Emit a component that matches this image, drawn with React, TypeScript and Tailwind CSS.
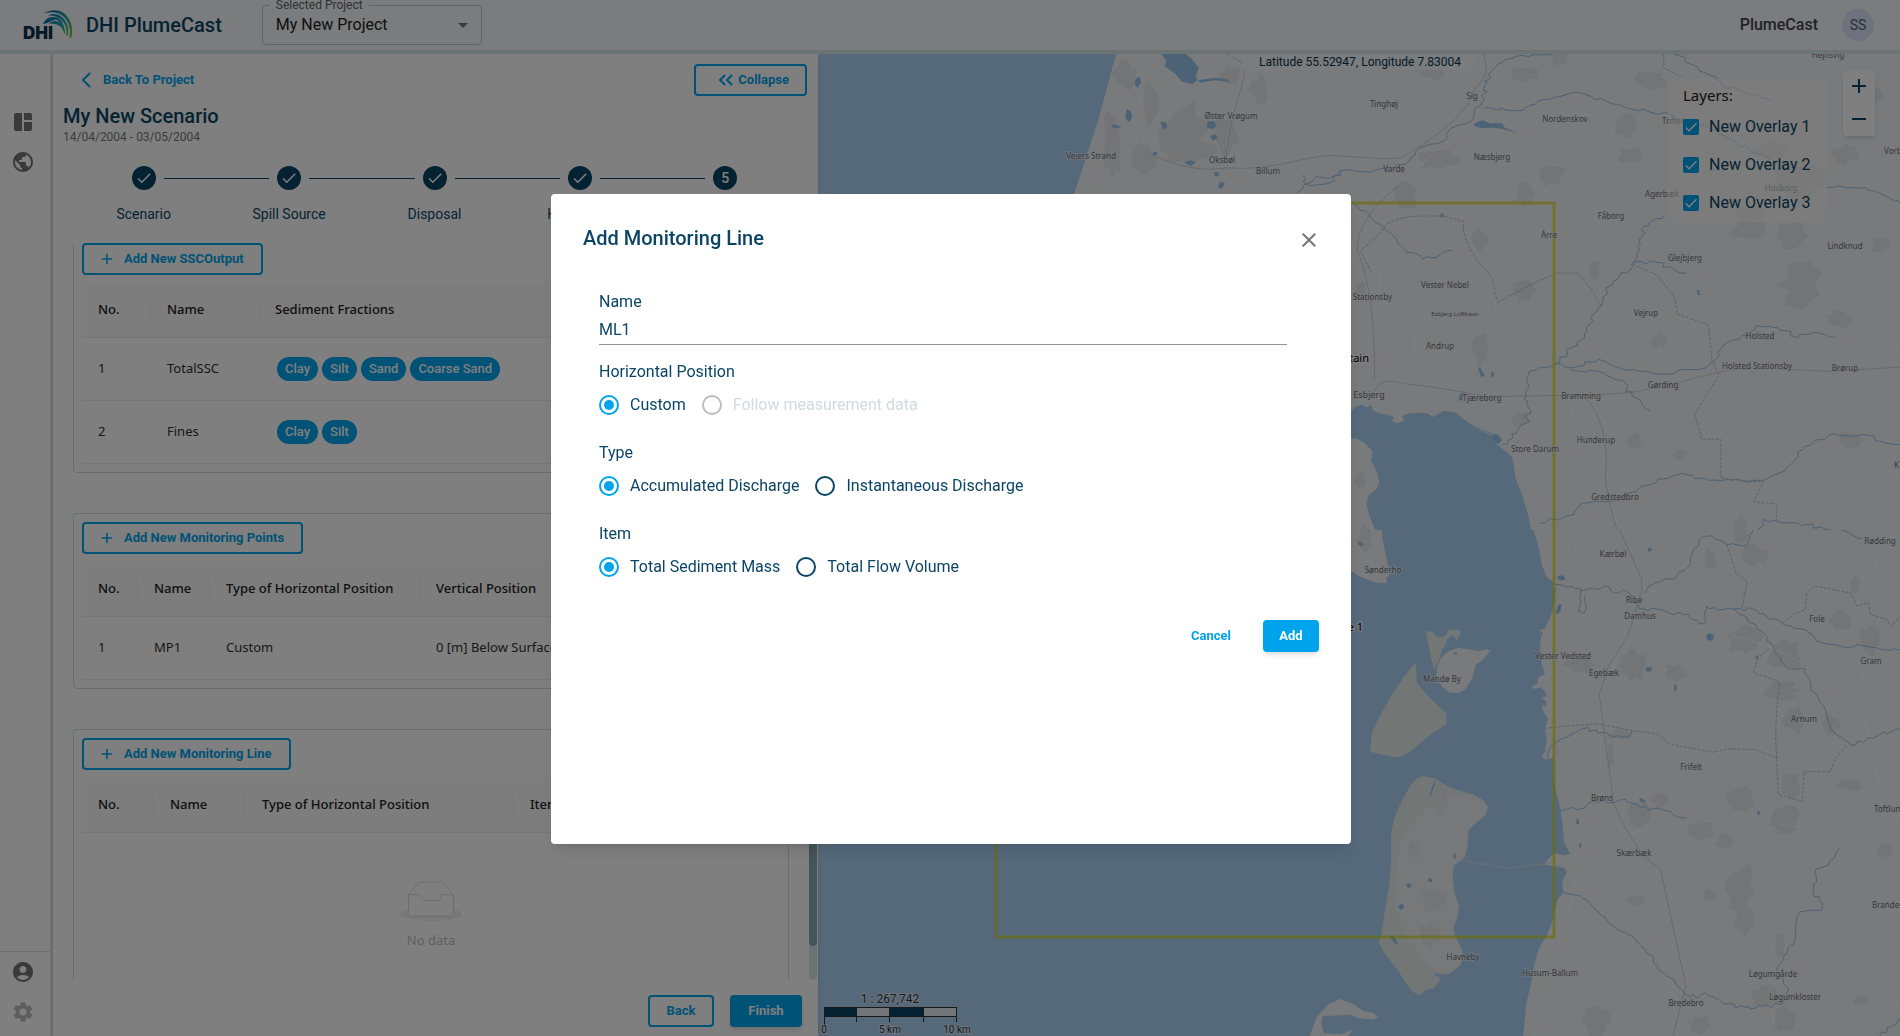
import React, { useState } from "react";
import {
  MdAccountCircle,
  MdAdd,
  MdArrowDropDown,
  MdCheck,
  MdClose,
  MdPublic,
  MdRemove,
  MdSettings,
  MdSpaceDashboard,
} from "react-icons/md";

/* ---------- map data ---------- */

type Pt = [number, number];

const pts = (s: string): Pt[] => {
  const n = s.trim().split(/[\s,]+/).map(Number);
  const out: Pt[] = [];
  for (let i = 0; i + 1 < n.length; i += 2) out.push([n[i], n[i + 1]]);
  return out;
};

const noise = (i: number) => {
  const v = Math.sin(i * 127.1 + 311.7) * 43758.5453;
  return v - Math.floor(v) - 0.5;
};

/* Subdivides a rough course and lets it meander. */
const meander = (s: string, amp = 5, step = 9) => {
  const p = pts(s);
  let d = `M${p[0][0]} ${p[0][1]}`;
  for (let i = 1; i < p.length; i++) {
    const [x0, y0] = p[i - 1];
    const [x1, y1] = p[i];
    const n = Math.max(1, Math.round(Math.hypot(x1 - x0, y1 - y0) / step));
    for (let k = 1; k <= n; k++) {
      const t = k / n;
      const j = k === n ? 0 : amp;
      const x = x0 + (x1 - x0) * t + noise(x0 + k * 3) * j;
      const y = y0 + (y1 - y0) * t + noise(y0 + k * 7) * j;
      d += `L${x.toFixed(1)} ${y.toFixed(1)}`;
    }
  }
  return d;
};

const blob = (cx: number, cy: number, rx: number, ry: number) => {
  let d = "";
  for (let i = 0; i < 16; i++) {
    const a = (i / 16) * Math.PI * 2;
    const r = 0.9 + noise(cx + cy * 2 + i) * 0.55;
    d += `${i ? "L" : "M"}${(cx + Math.cos(a) * rx * r).toFixed(1)} ${(cy + Math.sin(a) * ry * r).toFixed(1)}`;
  }
  return d + "Z";
};

const northLand =
  "M430 150L405 330 369 543 600 1100 771 1150 778 1140 786 1132 792 1140 800 1135 803 1150 812 1158 822 1160 834 1168 830 1180 838 1185 848 1178 845 1165 856 1157 875 1156 882 1158 890 1168 905 1150 925 1155 940 1180 960 1200 980 1218 978 1235 985 1248 1000 1270 1006 1285 1010 1340 1020 1390 1028 1440 1032 1480 1040 1530 1045 1568H1568V150Z" +
  "M700 1228L778 1228 790 1240 802 1262 800 1290 808 1320 812 1350 808 1370 797 1385 793 1410 797 1440 805 1480 815 1520 822 1568 700 1568Z";

const southLand =
  "M586 0L595 20 600 55 610 90 620 120 628 160 632 190 645 225 660 240 668 265 665 300 655 340 640 375 624 382 636 388 630 400 627 440 632 480 640 510 622 520 620 538 605 545 612 553 630 548 640 560 645 572 632 580 642 588 646 604 636 600 632 606 640 625 648 640 640 670 645 700 640 735 632 750 640 760 662 755 662 800 668 850 680 900 686 950 690 1000 705 1035 690 1040 665 1032 645 1055 640 1068 690 1075 697 1090 685 1115 688 1150 675 1165 668 1190 660 1230 645 1275 625 1310 610 1370 605 1410 592 1470 588 1510 583 1568H1568V0Z" +
  "M100 0L171 0 175 25 195 55 213 78 215 110 222 150 230 190 236 215 225 230 228 243 200 242 180 235 150 220 100 180Z" +
  "M370 460L390 440 415 433 470 442 485 437 498 440 475 470 460 480 450 520 435 550 415 565 390 563 370 545 357 520 357 490Z" +
  "M25 1568L45 1510 75 1475 105 1460 140 1475 165 1495 190 1500 205 1512 190 1520 150 1515 130 1505 100 1508 60 1510 55 1530 62 1560 110 1562 140 1548 125 1568Z";

const sand =
  "M325 808L352 815 395 843 455 862 480 880 491 900 485 920 440 965 438 1010 430 1045 402 1070 398 1100 405 1160 415 1185 410 1225 400 1250 405 1275 425 1320 420 1360C400 1380 380 1390 345 1385L368 1400 350 1428 330 1432 312 1450 290 1435 255 1375C240 1350 220 1330 206 1295L212 1275 225 1180C235 1130 238 1080 238 1010C237 960 245 930 262 890C280 850 300 805 325 808Z" +
  "M303 480L295 483 270 520 240 570 205 640 188 680 183 735 200 742 230 748 260 753 290 735 320 705 350 680 383 655 383 625 350 590 320 555 305 535Z" +
  "M329 385L345 385 360 402 380 398 390 380 418 380 420 390 410 410 400 395 385 405 380 425 370 440 365 465 350 495 340 450Z";

const romoLand =
  "M400 862L455 865 480 880 491 900 485 920 440 965 438 1010 430 1045 402 1070 398 1100 405 1160 415 1185 410 1225 400 1250 405 1275 425 1320 420 1360C400 1380 390 1390 370 1388C300 1330 262 1260 250 1180C258 1100 248 1020 275 980C300 930 350 868 400 862Z";

const northLakes =
  "M495 150L503 170 500 185 515 205 525 228 540 236 548 225 575 218 590 222 597 235 590 228 572 225 552 232 545 215 550 190 540 165 530 150ZM458 222l6-8 2 18-5 14-4-10zM445 305l6 5 2 20-4 12-6-12zM562 340l10-2 4 14-6 10-8-4zM566 380l8-4 4 12-8 6zM494 340l8 2 2 16-6 6zM422 348l12 4 4 6-12 0zM528 455l10-6 8 6-8 10zM572 482l6 0 2 10-6 2zM580 510l8 2-4 16-6-2zM484 425l5 0 1 8-6 2zM950 345l12-8 10 8 18 0 4 12 18 16-20-12-16-4-14 2-12-6zM930 1100l5 3-3 20-5-4zM955 1030l4 2 6 20-5 4zM975 1040l4 4-1 12-4-2zM976 1218l8-2 6 16-5 12-8-10zM901 598l4 0 1 10-5 2zM1203 1535l5 0 1 8-5 2zM1273 812l3 0 2 14-4 0z";

const southLakes =
  "M152 122l8 0 6 8-4 6-10-6zM908 142l8-2 3 8-8 4zM674 222l14-2 6 12-12 4-10-6zM1062 395l8-6 12 8-4 14-12 0-4-8zM905 488l16 2-6 12-12 0zM978 540l6 0 0 16-6 4zM1192 454l6 2-2 12-5-4zM722 934l6 0 2 14-8 0zM730 1004l6 2-2 14-5-4zM280 1122l8 0 2 10-8 4-4-8zM336 1106l10 4-2 8-10-4zM260 1184l8-2 4 10-8 8-8-8zM400 1035l6 0 2 14-6 0zM886 870l14 8 4 6-14 0zM1196 910l6 2-2 10-6-2zM676 304l8 2-4 20-8 8-4-6zM402 446l8 0 0 6-6 0zM352 820l-14 44 4 2 12-42zM242 1272l14 24-4 6-20-26z";

const northRivers = [
  "1085 152 1020 155 990 175 975 200 965 240 965 280 950 310 945 340 915 360 905 395 870 415 850 460 800 482 755 478 740 500 720 495 700 530 692 540",
  "965 300 1010 310 1040 290 1060 278 1092 260 1120 270 1170 302 1240 325 1260 340 1300 365 1350 420 1410 470",
  "700 490 712 520 740 512 755 480",
  "1240 152 1265 180 1300 215 1310 240 1380 280",
  "775 570 800 610 825 650 850 700 875 725 900 715 918 700",
  "1225 605 1195 635 1190 700 1180 745 1150 790 1130 860 1110 935 1085 990 1065 1020 1030 1040 1025 1110 1030 1180 1005 1215 990 1245",
  "1180 735 1215 735 1240 755 1258 765",
  "1065 1018 1090 1030 1130 1005 1160 1030 1200 1040 1215 1048 1275 1035 1300 1010 1310 970 1340 940 1360 912 1390 918 1420 945 1450 932 1475 945",
  "1090 1035 1130 1040 1165 1065 1180 1110 1205 1150",
  "1462 525 1500 525 1530 535 1568 570",
  "1045 1465 1095 1440 1105 1410 1160 1400 1190 1365 1250 1325 1290 1345 1370 1345 1400 1320 1430 1250 1470 1215 1510 1218 1568 1245",
  "1265 1568 1285 1500 1325 1530 1350 1530 1370 1455 1420 1465 1470 1485 1500 1505",
];

const southRivers = [
  "612 65 640 62 662 68 685 52 710 48 735 5 770 12 800 20 820 0",
  "650 235 700 255 775 262 795 252 820 272 845 262 865 280 885 318 940 320 965 330 1000 335 1055 362 1062 310 1090 320 1140 322",
  "735 262 735 300 728 325 742 332 748 312 746 280",
  "900 270 930 240 980 230 1010 200 1048 110 1065 105 1115 130 1165 135 1195 62 1215 58 1240 65 1320 75 1400 85 1470 112",
  "1135 318 1180 318 1220 340 1260 362 1330 390 1360 415 1420 430 1480 428 1568 440",
  "1140 325 1190 365 1220 400 1240 440 1270 490 1320 495 1340 560 1375 620 1385 670 1440 718 1490 695 1568 670",
  "650 758 655 720 690 695 720 680 740 668 790 680 830 690 862 690 868 676",
  "680 908 745 900 755 885 820 885 850 875 890 900 960 910 1010 930",
  "688 1146 730 1156 780 1205 820 1248 870 1278 925 1345 935 1372 980 1410 1005 1445",
  "1005 1445 1035 1455 1060 1442 1110 1475 1160 1485 1210 1482 1260 1475 1275 1440 1245 1375 1265 1330 1290 1300 1305 1205 1365 1198 1365 1180 1345 1160 1345 1090 1385 1055 1408 1018",
  "1515 1568 1568 1515",
];

const northRoads = [
  "M615 150C620 250 590 350 590 400C588 460 650 500 660 543",
  "M835 690C800 780 800 850 870 900C900 860 960 870 1000 890C1060 940 1110 950 1150 930C1240 900 1290 875 1360 875C1440 880 1500 930 1568 980",
  "M870 900C850 960 870 1040 868 1110",
  "M1035 600C980 750 970 850 990 980L1030 1060",
  "M1085 1110C1100 1200 1100 1280 1120 1310C1150 1400 1160 1500 1175 1568",
  "M700 150C720 260 740 300 780 360M1020 380C1040 430 1020 540 1090 560M1420 330C1380 420 1480 600 1510 700",
  "M900 1120C960 1220 1010 1260 1080 1270",
  "M1150 330L1010 290 940 350 860 480",
  "M1568 1330C1480 1330 1400 1310 1340 1400",
];
const northRails = [
  "M480 430C520 470 560 480 590 470C650 480 700 440 740 435C790 440 830 450 845 440C880 400 940 330 950 250C980 200 960 160 965 150",
  "M590 150L617 180C615 260 592 330 590 440",
  "M840 520C800 580 780 640 780 700C800 800 805 900 805 1060",
  "M805 1100C810 1060 830 1065 850 1075C900 1085 940 1100 970 1112C1060 1105 1140 1110 1190 1095C1260 1070 1300 1035 1350 1030L1470 1040 1568 1028",
  "M1108 1110C1140 1160 1145 1280 1140 1330C1145 1440 1165 1520 1175 1568",
];
const northBorders = [
  "M815 645C830 600 870 605 905 605L935 620C930 660 945 700 958 740C985 780 975 820 985 845L1040 790 1070 765 1100 765 1120 810 1135 860",
  "M820 640C800 680 790 690 785 705L800 760",
  "M1225 150L1225 190 1250 215",
  "M1180 740L1215 770 1240 830 1245 880 1290 910 1295 1010 1305 1050 1270 1160 1280 1230 1308 1230 1308 1340 1370 1350 1355 1405 1390 1412 1388 1460",
];
const southRoads = [
  "M720 0C710 60 700 120 700 200",
  "M895 235C980 180 1060 60 1150 0M900 265C1040 270 1100 280 1150 260",
  "M930 350C1050 370 1250 420 1310 480",
  "M865 320C840 400 840 480 785 560C780 700 790 800 790 890L845 975",
  "M660 1062C740 1040 730 1010 845 985C960 930 1100 950 1200 930C1310 980 1380 940 1568 940",
  "M1568 110L1500 160 1520 260M1465 480C1470 640 1510 800 1525 940C1480 1080 1380 1190 1260 1320",
  "M735 1045C700 1120 720 1180 700 1220C650 1300 620 1400 610 1568",
  "M875 1050L960 1160C1100 1220 1200 1300 1230 1400C1220 1450 1230 1500 1250 1568",
  "M930 380C1000 480 1100 580 1230 640C1300 720 1400 680 1500 780",
  "M1568 1480C1500 1540 1400 1560 1300 1480",
];
const southRails = [
  "M820 0L840 100 893 230 893 262 868 360 855 400 805 490 782 570 820 890 850 960 895 1040 942 1080 1008 1420 975 1568",
];
const southBorders = [
  "M640 668L690 662 780 655 870 675 935 685 970 715 1080 738 1120 728 1188 730 1248 756",
  "M1185 0L1195 14 1250 14 1243 62",
  "M1115 130L1140 215 1168 238 1155 315",
  "M1260 360L1290 335 1320 320 1325 270 1345 252 1440 272 1455 310 1485 300 1490 335 1530 348 1545 370 1568 340",
  "M1225 435L1195 465 1185 505 1253 532 1245 620 1243 700 1250 862 1312 882 1317 795 1385 795 1400 755 1430 718",
];

const forests: [number, number, number, number][] = [
  [1185, 130, 24, 30], [1125, 75, 12, 14], [1145, 160, 12, 18], [1190, 150, 30, 14], [1112, 145, 10, 34], [1225, 135, 14, 20],
  [1260, 90, 10, 14], [1230, 75, 10, 10], [1150, 105, 8, 22],
  [1430, 70, 16, 10], [1525, 73, 18, 8], [1560, 60, 8, 8], [1625, 125, 12, 14], [1630, 155, 14, 8], [1440, 160, 24, 10],
  [1405, 195, 14, 14], [1550, 175, 16, 12], [1525, 195, 10, 14], [1650, 80, 18, 10], [1800, 180, 26, 22], [1770, 150, 20, 8],
  [1845, 155, 14, 10], [1750, 230, 22, 10], [1790, 235, 18, 14], [1800, 285, 20, 26], [1840, 320, 14, 10], [1750, 215, 16, 10],
  [1480, 350, 8, 18], [1525, 290, 12, 12], [1480, 240, 8, 12], [1595, 270, 6, 10], [1880, 245, 10, 8], [1870, 95, 16, 8],
  [1635, 440, 8, 8], [1680, 455, 8, 6], [1850, 440, 12, 8], [1520, 420, 8, 8], [1660, 340, 8, 8],
  [1740, 530, 8, 14], [1755, 555, 14, 12], [1710, 560, 6, 12], [1745, 640, 20, 16], [1785, 655, 18, 18], [1635, 665, 14, 16],
  [1580, 665, 16, 8], [1675, 673, 12, 10], [1855, 585, 6, 10], [1840, 620, 14, 10], [1870, 640, 12, 14], [1780, 690, 20, 10],
  [1830, 725, 10, 10], [1795, 720, 12, 16], [1620, 735, 14, 6], [1610, 755, 4, 14], [1790, 785, 12, 14], [1740, 800, 14, 14],
  [1785, 820, 16, 14], [1700, 830, 18, 10], [1640, 815, 12, 14], [1660, 800, 10, 8], [1740, 890, 16, 26], [1745, 920, 10, 14],
  [1710, 895, 8, 6], [1725, 840, 10, 8], [1780, 945, 6, 14], [1635, 900, 10, 6], [1765, 995, 12, 14], [1595, 1020, 16, 16],
  [1785, 1020, 12, 14], [1700, 1025, 12, 8], [1860, 1000, 8, 6], [1850, 785, 12, 6], [1885, 850, 8, 8], [1440, 800, 8, 14],
  [1433, 900, 14, 14], [1430, 935, 12, 14], [1415, 850, 8, 10], [1365, 540, 8, 14], [1360, 480, 6, 10], [1360, 290, 6, 10],
];

type Place = [string, number, number, ("start" | "end")?, number?];
const places: Place[] = [
  ["Vejers Strand", 1091, 156], ["Øster Vrøgum", 1231, 116], ["Tinghøj", 1384, 104], ["Sig", 1472, 96],
  ["Nordenskov", 1565, 119], ["Oksbøl", 1222, 160], ["Billum", 1268, 171], ["Varde", 1394, 169],
  ["Næsbjerg", 1492, 157], ["Tofterup", 1662, 121, "start"], ["Agerbæk", 1662, 194], ["Hovborg", 1781, 188],
  ["Fåborg", 1611, 216], ["Årre", 1549, 235], ["Glejbjerg", 1685, 258], ["Lindknud", 1845, 246],
  ["Vester Nebel", 1445, 285], ["er Stationsby", 1392, 297, "end"], ["Esbjerg Lufthavn", 1455, 313, undefined, 6],
  ["Vejrup", 1646, 313], ["Holsted", 1760, 336], ["Holsted Stationsby", 1757, 366], ["Brørup", 1845, 368],
  ["Andrup", 1440, 346], ["Gørding", 1663, 385], ["Bramming", 1581, 396], ["Esbjerg", 1369, 395, undefined, 9],
  ["Tjæreborg", 1482, 398], ["Store Darum", 1535, 449], ["Hunderup", 1596, 440], ["Gredstedbro", 1615, 497],
  ["Kærbøl", 1613, 554], ["Rødding", 1880, 541], ["Hejnsvig", 1828, 55], ["Vorbasse", 1884, 151, "start"],
  ["K", 1894, 465, "start"], ["Sønderho", 1383, 570], ["Ribe", 1634, 600], ["Damhus", 1640, 616], ["Fole", 1817, 619],
  ["Vester Vedsted", 1563, 656], ["Egebæk", 1604, 673], ["Gram", 1871, 661], ["Mandø By", 1442, 679],
  ["Arnum", 1804, 719], ["Frifelt", 1691, 767], ["Brøns", 1602, 798], ["Toftlund", 1874, 809, "start"],
  ["Skærbæk", 1634, 853], ["Branderup", 1872, 905, "start"], ["Havneby", 1463, 957], ["Husum-Ballum", 1550, 973],
  ["Løgumgårde", 1773, 974], ["Løgumkloster", 1795, 997], ["Bredebro", 1686, 1003],
];

function Lines({ d, stroke, width, dash }: { d: string[]; stroke: string; width: number; dash?: string }) {
  return (
    <path
      d={d.join("")}
      fill="none"
      stroke={stroke}
      strokeWidth={width}
      strokeDasharray={dash}
      strokeLinejoin="round"
      vectorEffect="non-scaling-stroke"
    />
  );
}

function MapCanvas() {
  return (
    <svg
      viewBox="818 54 1082 982"
      preserveAspectRatio="xMidYMid slice"
      className="absolute inset-0 h-full w-full"
      fontFamily='"Noto Sans", sans-serif'
      aria-label="Map"
    >
      <rect x="818" y="54" width="1082" height="982" fill="#acd2f6" />
      <clipPath id="north"><rect x="818" y="54" width="1082" height="476" /></clipPath>
      <clipPath id="south"><rect x="818" y="530" width="1082" height="506" /></clipPath>
      <g clipPath="url(#north)">
        <path transform="translate(820 0) scale(.6888 .3571)" d={northLand} fill="#f3f5f8" />
      </g>
      <g clipPath="url(#south)">
        <g transform="translate(1300 500) scale(.3827 .3418)">
          <path d={southLand} fill="#f3f5f8" />
          <path d={sand} fill="#e4eeec" />
          <path d={romoLand} fill="#eff1f3" />
        </g>
      </g>
      <path d={forests.map((f) => blob(...f)).join("")} fill="#e6e8eb" />
      <g clipPath="url(#north)">
        <g transform="translate(820 0) scale(.6888 .3571)">
          <Lines d={northRoads} stroke="#fdfdfe" width={1} />
          <Lines d={northRails} stroke="#d0d2d4" width={1} />
          <Lines d={northBorders} stroke="#bcbec1" width={1} dash="3 1.5" />
          <path d={northLakes} fill="#98c6ef" />
          <Lines d={northRivers.map((r) => meander(r, 10, 9))} stroke="#98c3ea" width={1} />
        </g>
      </g>
      <g clipPath="url(#south)">
        <g transform="translate(1300 500) scale(.3827 .3418)">
          <Lines d={southRoads} stroke="#fdfdfe" width={1} />
          <Lines d={["M415 1052L545 1078 600 1070 660 1062"]} stroke="#d9e3ec" width={1} />
          <Lines d={southRails} stroke="#d0d2d4" width={1} />
          <Lines d={southBorders} stroke="#bcbec1" width={1} dash="3 1.5" />
          <path d={southLakes} fill="#98c6ef" />
          <Lines d={southRivers.map((r) => meander(r, 11, 11))} stroke="#98c3ea" width={1} />
        </g>
      </g>
      <rect x="996" y="203" width="558" height="734" fill="none" stroke="#d8d800" strokeOpacity="0.6" strokeWidth="3" />
      <g fill="#6e7078" stroke="#f3f5f8" strokeOpacity="0.6" strokeWidth="2" paintOrder="stroke">
        {places.map(([name, x, y, anchor, size]) => (
          <text key={name} x={x} y={y + 3} fontSize={size ?? 8} textAnchor={anchor ?? "middle"}>
            {name}
          </text>
        ))}
      </g>
      <g fill="#000" stroke="#fff" strokeOpacity="0.7" strokeWidth="3" paintOrder="stroke" fontSize="11">
        <text x="1369" y="362" textAnchor="end">tain</text>
        <text x="1363" y="631" textAnchor="end">e 1</text>
      </g>
    </svg>
  );
}

function ScaleBar() {
  return (
    <svg viewBox="0 0 160 46" className="absolute bottom-0 left-0 h-[46px] w-[160px]" fontFamily="Roboto, sans-serif" aria-label="Scale">
      <rect x="6" y="17" width="132" height="10" fill="#e6ecf0" />
      <path d="M6 17h32v10H6zM71 17h34v10H71z" fill="#0b4566" />
      <path d="M6 17.500H138.500V26.500H6.500V17M38.500 17V32M71.500 17V32M105.500 17V32M138.500 17V32M6.500 17V36" fill="none" stroke="#333" />
      <g fill="#333" textAnchor="middle" stroke="#fff" strokeOpacity="0.5" strokeWidth="2" paintOrder="stroke">
        <text x="72" y="13" fontSize="12">1 : 267,742</text>
        <g fontSize="10">
          <text x="6" y="43">0</text>
          <text x="72" y="43">5 km</text>
          <text x="139" y="43">10 km</text>
        </g>
      </g>
    </svg>
  );
}

/* ---------- shell ---------- */

function Logo() {
  return (
    <svg viewBox="0 0 50 30" className="h-[30px] w-[50px]" role="img" aria-label="DHI">
      <defs>
        <linearGradient id="wave" x1="22" y1="4" x2="50" y2="24" gradientUnits="userSpaceOnUse">
          <stop offset="0" stopColor="#0a6aa8" />
          <stop offset="0.55" stopColor="#1f9db5" />
          <stop offset="0.8" stopColor="#4fb868" />
          <stop offset="1" stopColor="#7cc242" />
        </linearGradient>
      </defs>
      <g fill="url(#wave)">
        <path d="M21 3C26 .5 31 -.5 36 .8C43 3 48 10 49 18C49.500 22 49 26 48 28L46.500 28C48 20 46 12 41 7C36 2 29 1.500 21 3Z" />
        <path d="M25 5.500C31 2.500 37 4.500 41 9C45 14 46 20 45 26L43.500 25C44 18 42 13 38 9.500C34 6 30 5 25 5.500Z" />
        <path d="M20 14C22 9 27 6 32 7.500C33 8 34 9 34.500 10C30 9 28 13 20 14Z" />
        <path d="M31 6.500C36 7 40 12 41 17C42 20 42 22 42 24C39 20 39 14 31 6.500Z" />
        <path d="M26 14C29 10.500 33 10 36 12.500C38 14 39 16 39.500 18.500C36 14.500 32 13 26 14Z" />
      </g>
      <text x="0" y="29" fontFamily="Inter, sans-serif" fontWeight="900" fontSize="17" fill="#0b3550">DHI</text>
    </svg>
  );
}

function Header() {
  return (
    <header className="flex h-[54px] shrink-0 items-center border-b-4 border-[#d8e6e6] bg-[#f6f8fb] pr-[26px] pl-[23px]">
      <Logo />
      <h1 className="ml-[13px] text-xl font-medium text-[#0b4566]">DHI PlumeCast</h1>
      <div className="relative ml-10 h-10 w-[220px]">
        <label htmlFor="project" className="absolute -top-2 left-2 bg-[#f6f8fb] px-1.5 text-xs text-[#5f6368]">
          Selected Project
        </label>
        <select
          id="project"
          className="h-full w-full appearance-none rounded border border-[#c0c4c8] bg-transparent px-[13px] text-base text-[#212121]"
        >
          <option>My New Project</option>
        </select>
        <MdArrowDropDown className="pointer-events-none absolute top-2 right-[7px] size-6 text-[#757575]" />
      </div>
      <span className="ml-auto text-base font-medium text-[#42444e]">PlumeCast</span>
      <button className="ml-6 flex size-8 items-center justify-center rounded-full bg-[#dde4f8] text-sm text-[#56607c]">SS</button>
    </header>
  );
}

function Sidebar() {
  return (
    <nav className="flex w-[53px] shrink-0 flex-col border-r-3 border-[#d8e4e8] bg-white pt-14">
      <div className="flex flex-col items-center gap-4 pr-1 text-[#757575]">
        <button aria-label="Dashboard"><MdSpaceDashboard className="size-6" /></button>
        <button aria-label="Map"><MdPublic className="size-6" /></button>
      </div>
      <div className="mt-auto flex flex-col items-center gap-4 border-t border-[#d3dfe5] pt-2 pr-1 pb-3 text-[#757575]">
        <button aria-label="Account"><MdAccountCircle className="size-6" /></button>
        <button aria-label="Settings" className="text-[#bdbdbd]"><MdSettings className="size-6" /></button>
      </div>
    </nav>
  );
}

function OutlineButton({ children, className = "" }: { children: React.ReactNode; className?: string }) {
  return (
    <button
      className={`flex h-8 items-center rounded border-2 border-[#00a4ec] text-[13px] font-bold text-[#00a4ec] ${className}`}
    >
      {children}
    </button>
  );
}

const steps = ["Scenario", "Spill Source", "Disposal", "Hydraulics", "Output"];

function Stepper() {
  return (
    <ol className="mt-[22px] mr-5 ml-[18px] flex">
      {steps.map((s, i) => (
        <li key={s} className="flex flex-1 flex-col items-center">
          <div className="flex w-full items-center gap-2">
            <span className={i === 0 ? "h-px flex-1" : "h-px flex-1 bg-[#0b4566]"} />
            <span className="flex size-6 items-center justify-center rounded-full bg-[#0b4566] text-sm font-medium text-white">
              {i < 4 ? <MdCheck className="size-[18px]" /> : i + 1}
            </span>
            <span className={i === 4 ? "h-px flex-1" : "h-px flex-1 bg-[#0b4566]"} />
          </div>
          <span className="mt-3.5 text-sm text-[#0b4566]">{s}</span>
        </li>
      ))}
    </ol>
  );
}

type Column = { title: string; width: string };

function DataTable({ columns, rows }: { columns: Column[]; rows: React.ReactNode[][] }) {
  return (
    <table className="mt-2 w-full table-fixed border-separate border-spacing-0 font-['Noto_Sans',sans-serif] text-[13px]">
      <thead>
        <tr>
          {columns.map((c, i) => (
            <th
              key={c.title}
              className={`h-[55px] border-b border-[#eaeaea] bg-[#fafafa] p-0 text-left font-medium whitespace-nowrap text-[#202020] first:rounded-tl-lg last:rounded-tr-lg ${c.width}`}
            >
              <div className={`flex h-[22px] items-center pl-4 ${i < columns.length - 1 ? "border-r border-[#f0f0f0]" : ""}`}>
                {c.title}
              </div>
            </th>
          ))}
        </tr>
      </thead>
      <tbody>
        {rows.map((r, i) => (
          <tr key={i}>
            {r.map((cell, j) => (
              <td key={j} className="h-[63px] overflow-hidden border-b border-[#eaeaea] py-0 pl-4 whitespace-nowrap text-[#303030]">
                {cell}
              </td>
            ))}
          </tr>
        ))}
        {rows.length === 0 && (
          <tr>
            <td colSpan={columns.length} className="pt-12 pb-12 text-[#bfbfbf]">
              <div className="flex flex-col items-center gap-2">
                <svg viewBox="0 0 64 41" className="h-10 w-16" aria-hidden="true">
                  <g transform="translate(0 1)" fill="none" fillRule="evenodd">
                    <ellipse fill="#f0f0f0" cx="32" cy="33" rx="32" ry="7" />
                    <g fillRule="nonzero" stroke="#d9d9d9">
                      <path d="M55 12.760L44.854 1.258C44.367.474 43.656 0 42.907 0H21.093c-.749 0-1.460.474-1.947 1.257L9 12.761V22h46v-9.240z" fill="#fff" />
                      <path
                        d="M41.613 15.931c0-1.605.994-2.930 2.227-2.931H55v18.137C55 33.260 53.680 35 52.050 35h-40.100C10.320 35 9 33.259 9 31.137V13h11.160c1.233 0 2.227 1.323 2.227 2.928v.022c0 1.605 1.005 2.901 2.237 2.901h14.752c1.232 0 2.237-1.308 2.237-2.913v-.007z"
                        fill="#fff"
                      />
                    </g>
                  </g>
                </svg>
                <span className="leading-[22px]">No data</span>
              </div>
            </td>
          </tr>
        )}
      </tbody>
    </table>
  );
}

function Card({ action, first, children }: { action: string; first?: boolean; children: React.ReactNode }) {
  return (
    <section className={`border border-[#cfdde3] p-2 ${first ? "rounded-b border-t-0 pt-0" : "mt-10 rounded"}`}>
      <OutlineButton className="gap-2 pr-[17px] pl-3.5">
        <MdAdd className="size-[18px]" />
        {action}
      </OutlineButton>
      {children}
    </section>
  );
}

function Chips({ items }: { items: string[] }) {
  return (
    <div className="flex gap-1 pl-0.5 font-[Roboto,sans-serif] font-medium">
      {items.map((t) => (
        <span key={t} className="flex h-6 items-center rounded-full bg-[#00a4ec] px-2 text-white">
          {t}
        </span>
      ))}
    </div>
  );
}

function ScenarioPanel() {
  return (
    <main className="z-10 flex w-[765px] shrink-0 flex-col bg-white shadow-md">
      <div className="flex items-center justify-between pt-2.5 pr-[11px] pl-6">
        <button className="flex items-center gap-2 text-[13px] font-bold text-[#00a4ec]">
          <svg viewBox="0 0 18 18" className="size-[18px]" fill="none" stroke="currentColor" strokeWidth="2" aria-hidden="true">
            <path d="M13 2L6 9l7 7" />
          </svg>
          Back To Project
        </button>
        <OutlineButton className="gap-1 pr-4 pl-5">
          <svg viewBox="0 0 18 18" className="size-[18px]" fill="none" stroke="currentColor" strokeWidth="2" aria-hidden="true">
            <path d="M9 4L4 9l5 5M16 4l-5 5 5 5" />
          </svg>
          Collapse
        </OutlineButton>
      </div>
      <div className="pt-1.5 pl-2.5">
        <h2 className="text-xl leading-7 font-medium text-[#0b4566]">My New Scenario</h2>
        <p className="text-xs leading-[14px] text-[#757575]">14/04/2004 - 03/05/2004</p>
      </div>
      <Stepper />
      <div className="mt-[19px] mr-px flex min-h-0 flex-1">
        <div className="min-w-0 flex-1 overflow-hidden pr-5 pl-5">
          <Card action="Add New SSCOutput" first>
            <DataTable
              columns={[
                { title: "No.", width: "w-[69px]" },
                { title: "Name", width: "w-[108px]" },
                { title: "Sediment Fractions", width: "" },
              ]}
              rows={[
                ["1", "TotalSSC", <Chips items={["Clay", "Silt", "Sand", "Coarse Sand"]} />],
                ["2", "Fines", <Chips items={["Clay", "Silt"]} />],
              ]}
            />
          </Card>
          <Card action="Add New Monitoring Points">
            <DataTable
              columns={[
                { title: "No.", width: "w-14" },
                { title: "Name", width: "w-[72px]" },
                { title: "Type of Horizontal Position", width: "w-[210px]" },
                { title: "Vertical Position", width: "" },
              ]}
              rows={[["1", "MP1", "Custom", "0 [m] Below Surface"]]}
            />
          </Card>
          <Card action="Add New Monitoring Line">
            <DataTable
              columns={[
                { title: "No.", width: "w-[72px]" },
                { title: "Name", width: "w-[92px]" },
                { title: "Type of Horizontal Position", width: "w-[268px]" },
                { title: "Item", width: "" },
              ]}
              rows={[]}
            />
          </Card>
        </div>
        <div className="flex w-2 flex-col rounded bg-[#dbe4e9]">
          <div className="mt-auto mb-[34px] h-3/5 rounded bg-[#8ba8b5]" />
        </div>
      </div>
      <footer className="flex justify-end gap-4 px-4 pt-[15px] pb-[9px]">
        <OutlineButton className="min-w-[66px] justify-center">Back</OutlineButton>
        <button className="h-8 min-w-[72px] rounded bg-[#00a4ec] text-[13px] font-bold text-white shadow-md">Finish</button>
      </footer>
    </main>
  );
}

function LayersPanel() {
  return (
    <fieldset className="absolute top-[25px] right-[73px] w-[159px] bg-[#fbfdf6]/50 px-[15px] pt-1.5">
      <div className="mb-0.5 font-['Noto_Sans',sans-serif] text-[15px] leading-[21px] text-[#202020]">Layers:</div>
      {["New Overlay 1", "New Overlay 2", "New Overlay 3"].map((l) => (
        <label key={l} className="flex h-[38px] items-center gap-2.5 text-base text-[#0b4566]">
          <span className="relative flex size-4">
            <input type="checkbox" defaultChecked className="peer size-4 appearance-none rounded-xs border-2 border-[#0b4566] checked:border-0 checked:bg-[#00a4ec]" />
            <MdCheck className="pointer-events-none absolute inset-0 hidden size-4 text-white peer-checked:block" />
          </span>
          {l}
        </label>
      ))}
    </fieldset>
  );
}

function MapPanel() {
  return (
    <section className="relative min-w-0 flex-1 overflow-hidden bg-[#acd2f6]">
      <MapCanvas />
      <div className="absolute top-0 left-1/2 flex h-4 -translate-x-[116px] items-center bg-[#f6f9f9]/90 px-4 text-xs whitespace-nowrap text-[#0b3550]">
        Latitude 55.52947, Longitude 7.83004
      </div>
      <LayersPanel />
      <div className="absolute top-4 right-[25px] flex w-8 flex-col items-center rounded bg-white text-[#0b4566] shadow-md">
        <button aria-label="Zoom in" className="flex h-8 items-center"><MdAdd className="size-6" /></button>
        <button aria-label="Zoom out" className="flex h-[34px] items-center"><MdRemove className="size-6" /></button>
      </div>
      <ScaleBar />
    </section>
  );
}

/* ---------- dialog ---------- */

type Option = { label: string; disabled?: boolean };

function RadioGroup({ legend, options }: { legend: string; options: Option[] }) {
  const [value, setValue] = useState(options[0].label);
  return (
    <fieldset className="mt-[15px]">
      <legend className="h-6 leading-6">{legend}</legend>
      <div className="flex h-[42px] items-center gap-4">
        {options.map((o) => (
          <label key={o.label} className={`flex items-center gap-[11px] ${o.disabled ? "text-[#cfdbe2]" : ""}`}>
            <input
              type="radio"
              name={legend}
              checked={value === o.label}
              onChange={() => setValue(o.label)}
              disabled={o.disabled}
              className="size-5 appearance-none rounded-full border-2 border-[#0b4566] bg-clip-content p-[3px] checked:border-[#00a4ec] checked:bg-[#00a4ec] disabled:border-[#bdbdbd]"
            />
            {o.label}
          </label>
        ))}
      </div>
    </fieldset>
  );
}

function AddLineDialog() {
  return (
    <div className="fixed inset-0 z-20 flex items-center justify-center bg-black/50 pt-0.5 pl-0.5">
      <div
        role="dialog"
        aria-labelledby="dialog-title"
        className="flex min-h-[650px] w-[800px] flex-col rounded bg-white p-8 text-base text-[#0b4566] shadow-lg"
      >
        <div className="flex h-6 items-center justify-between">
          <h2 id="dialog-title" className="text-xl leading-6 font-medium">Add Monitoring Line</h2>
          <button aria-label="Close" className="-mr-0.5 flex h-7 items-end text-[#757575]">
            <MdClose className="size-6" />
          </button>
        </div>
        <form className="mt-10 pr-8 pl-4" onSubmit={(e) => e.preventDefault()}>
          <label htmlFor="line-name" className="block leading-6">Name</label>
          <input id="line-name" defaultValue="ML1" className="block h-[31px] w-full border-b border-[#949494] outline-none" />
          <RadioGroup legend="Horizontal Position" options={[{ label: "Custom" }, { label: "Follow measurement data", disabled: true }]} />
          <RadioGroup legend="Type" options={[{ label: "Accumulated Discharge" }, { label: "Instantaneous Discharge" }]} />
          <RadioGroup legend="Item" options={[{ label: "Total Sediment Mass" }, { label: "Total Flow Volume" }]} />
        </form>
        <div className="mt-8 flex justify-end gap-4 text-[13px] font-bold">
          <button className="h-8 px-4 text-[#00a4ec]">Cancel</button>
          <button className="h-8 min-w-14 rounded bg-[#00a4ec] text-white shadow-md">Add</button>
        </div>
      </div>
    </div>
  );
}

export default function App() {
  return (
    <div className="flex h-screen flex-col overflow-hidden bg-white font-[Roboto,sans-serif]">
      <Header />
      <div className="flex min-h-0 flex-1">
        <Sidebar />
        <ScenarioPanel />
        <MapPanel />
      </div>
      <AddLineDialog />
    </div>
  );
}
